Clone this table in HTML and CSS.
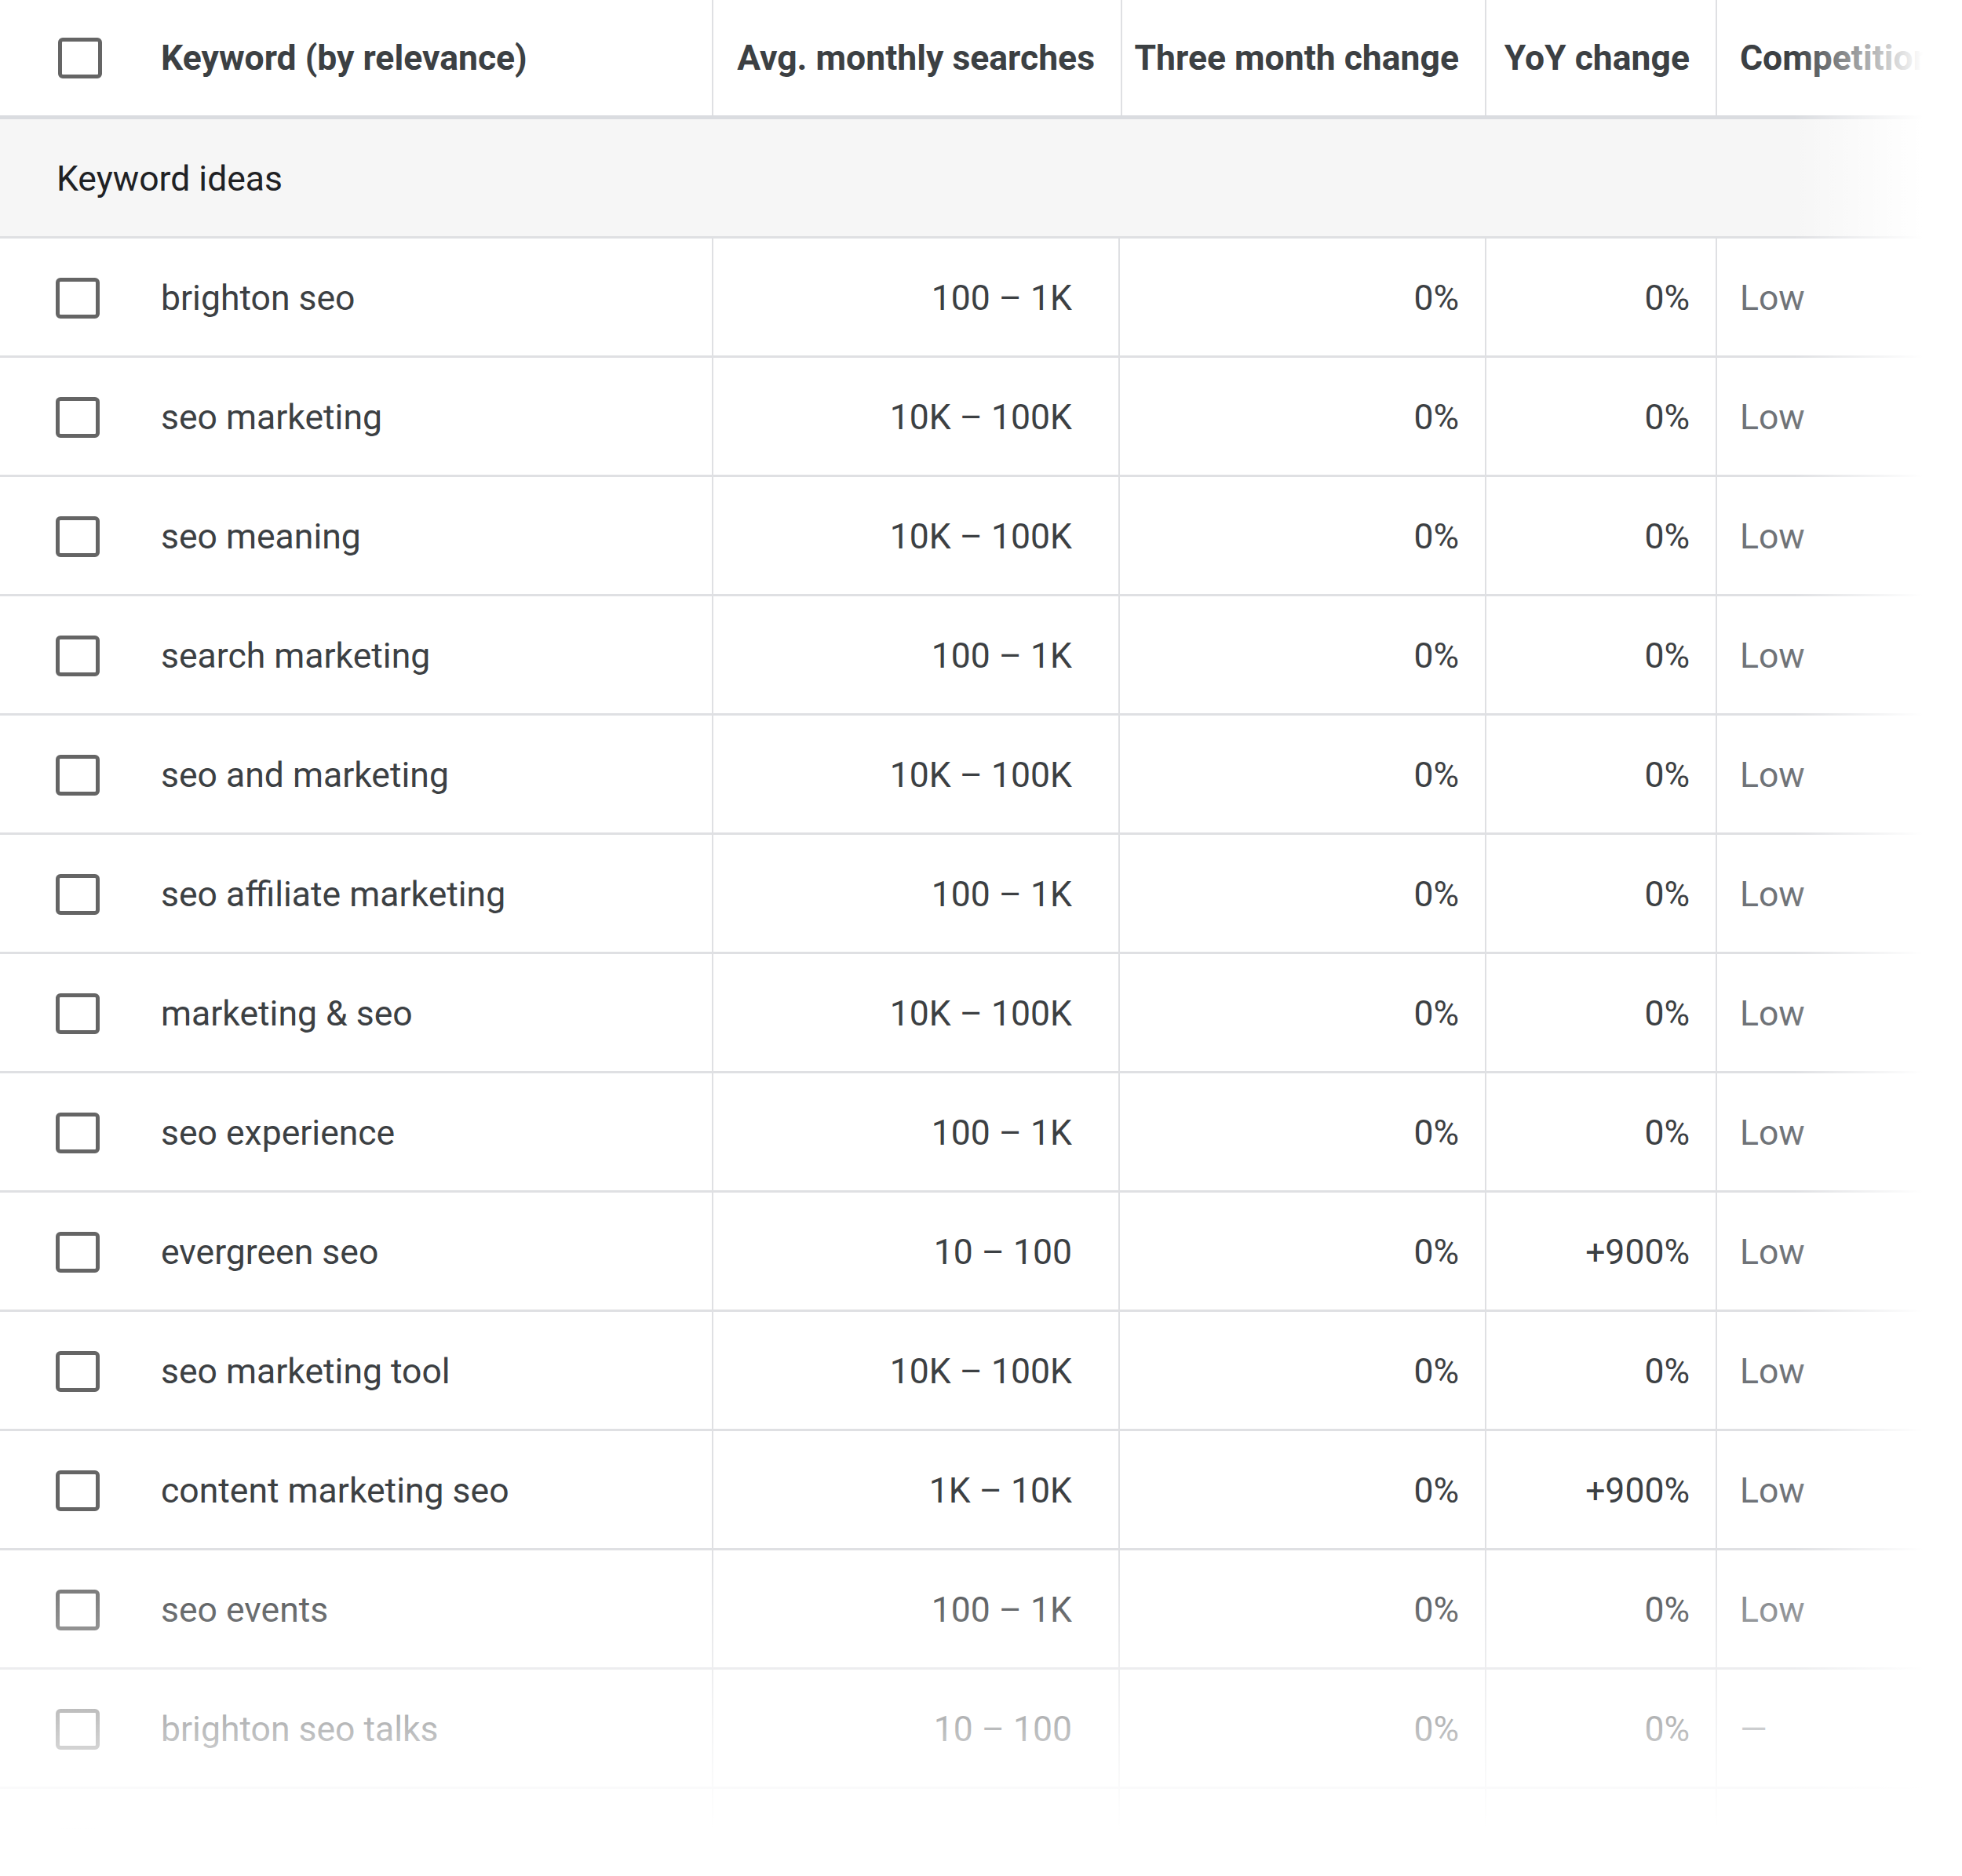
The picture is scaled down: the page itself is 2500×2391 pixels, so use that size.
FILE: index.html
```html
<!DOCTYPE html>
<html lang="en">
<head>
<meta charset="utf-8">
<title>Keyword ideas</title>
<link rel="stylesheet" href="styles.css">
</head>
<body>
<div class="page">
  <div class="table">
    <div class="row head">
      <div class="cell kw"><span class="cb"></span><span class="htext">Keyword (by relevance)</span></div>
      <div class="cell num hnum">Avg. monthly searches</div>
      <div class="cell num tm">Three month change</div>
      <div class="cell num yoy">YoY change</div>
      <div class="cell comp"><span class="htext comp-h">Competition</span></div>
    </div>
    <div class="group">Keyword ideas</div>
    <div class="row"><div class="cell kw"><span class="cb"></span><span>brighton seo</span></div><div class="cell num avg">100 – 1K</div><div class="cell num tm">0%</div><div class="cell num yoy">0%</div><div class="cell comp low">Low</div></div>
    <div class="row"><div class="cell kw"><span class="cb"></span><span>seo marketing</span></div><div class="cell num avg">10K – 100K</div><div class="cell num tm">0%</div><div class="cell num yoy">0%</div><div class="cell comp low">Low</div></div>
    <div class="row"><div class="cell kw"><span class="cb"></span><span>seo meaning</span></div><div class="cell num avg">10K – 100K</div><div class="cell num tm">0%</div><div class="cell num yoy">0%</div><div class="cell comp low">Low</div></div>
    <div class="row"><div class="cell kw"><span class="cb"></span><span>search marketing</span></div><div class="cell num avg">100 – 1K</div><div class="cell num tm">0%</div><div class="cell num yoy">0%</div><div class="cell comp low">Low</div></div>
    <div class="row"><div class="cell kw"><span class="cb"></span><span>seo and marketing</span></div><div class="cell num avg">10K – 100K</div><div class="cell num tm">0%</div><div class="cell num yoy">0%</div><div class="cell comp low">Low</div></div>
    <div class="row"><div class="cell kw"><span class="cb"></span><span>seo affiliate marketing</span></div><div class="cell num avg">100 – 1K</div><div class="cell num tm">0%</div><div class="cell num yoy">0%</div><div class="cell comp low">Low</div></div>
    <div class="row"><div class="cell kw"><span class="cb"></span><span>marketing &amp; seo</span></div><div class="cell num avg">10K – 100K</div><div class="cell num tm">0%</div><div class="cell num yoy">0%</div><div class="cell comp low">Low</div></div>
    <div class="row"><div class="cell kw"><span class="cb"></span><span>seo experience</span></div><div class="cell num avg">100 – 1K</div><div class="cell num tm">0%</div><div class="cell num yoy">0%</div><div class="cell comp low">Low</div></div>
    <div class="row"><div class="cell kw"><span class="cb"></span><span>evergreen seo</span></div><div class="cell num avg">10 – 100</div><div class="cell num tm">0%</div><div class="cell num yoy">+900%</div><div class="cell comp low">Low</div></div>
    <div class="row"><div class="cell kw"><span class="cb"></span><span>seo marketing tool</span></div><div class="cell num avg">10K – 100K</div><div class="cell num tm">0%</div><div class="cell num yoy">0%</div><div class="cell comp low">Low</div></div>
    <div class="row"><div class="cell kw"><span class="cb"></span><span>content marketing seo</span></div><div class="cell num avg">1K – 10K</div><div class="cell num tm">0%</div><div class="cell num yoy">+900%</div><div class="cell comp low">Low</div></div>
    <div class="row"><div class="cell kw"><span class="cb"></span><span>seo events</span></div><div class="cell num avg">100 – 1K</div><div class="cell num tm">0%</div><div class="cell num yoy">0%</div><div class="cell comp low">Low</div></div>
    <div class="row"><div class="cell kw"><span class="cb"></span><span>brighton seo talks</span></div><div class="cell num avg">10 – 100</div><div class="cell num tm">0%</div><div class="cell num yoy">0%</div><div class="cell comp low">—</div></div>
    <div class="row"><div class="cell kw"><span class="cb"></span><span>seo brighton</span></div><div class="cell num avg">10 – 100</div><div class="cell num tm">0%</div><div class="cell num yoy">0%</div><div class="cell comp low">Low</div></div>
  </div>
  <div class="fade-right"></div>
  <div class="fade-bottom"></div>
</div>
</body>
</html>
```
FILE: styles.css
```css
html, body {
  margin: 0;
  padding: 0;
  background: #ffffff;
}
body {
  font-family: Roboto, "Liberation Sans", Arial, sans-serif;
  font-size: 44.5px;
  color: #3c4043;
}
.page {
  position: relative;
  width: 2500px;
  height: 2391px;
  overflow: hidden;
}
.table {
  width: 2700px;
}
.row {
  display: grid;
  grid-template-columns: 907px 518px 467px 294px 514px;
  height: 149px;
  border-bottom: 3px solid #dfe0e3;
}
.row.head {
  grid-template-columns: 907px 521px 464px 294px 514px;
  height: 147px;
  border-bottom: 5px solid #dadce0;
}
.cell {
  display: flex;
  align-items: center;
  padding-top: 3px;
  border-left: 2px solid #dfe0e3;
  min-width: 0;
  white-space: nowrap;
}
.cell.kw {
  border-left: none;
  padding-left: 71px;
  gap: 78px;
}
.head .cell {
  padding-top: 0;
  color: #3c4043;
  font-weight: 700;
}
.head .cell.kw {
  padding-left: 74px;
  gap: 75px;
}
.cb {
  flex: none;
  width: 46px;
  height: 42px;
  border: 5px solid #656565;
  border-radius: 6px;
  background: #fff;
}
.num {
  justify-content: flex-end;
  padding-right: 33px;
}
.num.avg {
  padding-right: 59px;
}
.comp {
  padding-left: 29px;
}
.low {
  color: #6f7378;
}
.group {
  height: 147px;
  padding-top: 2px;
  border-bottom: 3px solid #dfe0e3;
  background: #f6f6f6;
  display: flex;
  align-items: center;
  padding-left: 72px;
  color: #202124;
}
.fade-right {
  position: absolute;
  top: 0;
  right: 0;
  width: 215px;
  height: 100%;
  background: linear-gradient(to right, rgba(255,255,255,0) 0px, #ffffff 165px, #ffffff 215px);
}
.fade-bottom {
  position: absolute;
  left: 0;
  bottom: 0;
  width: 100%;
  height: 420px;
  background: linear-gradient(to bottom, rgba(255,255,255,0) 0px, #ffffff 360px, #ffffff 420px);
}
```
